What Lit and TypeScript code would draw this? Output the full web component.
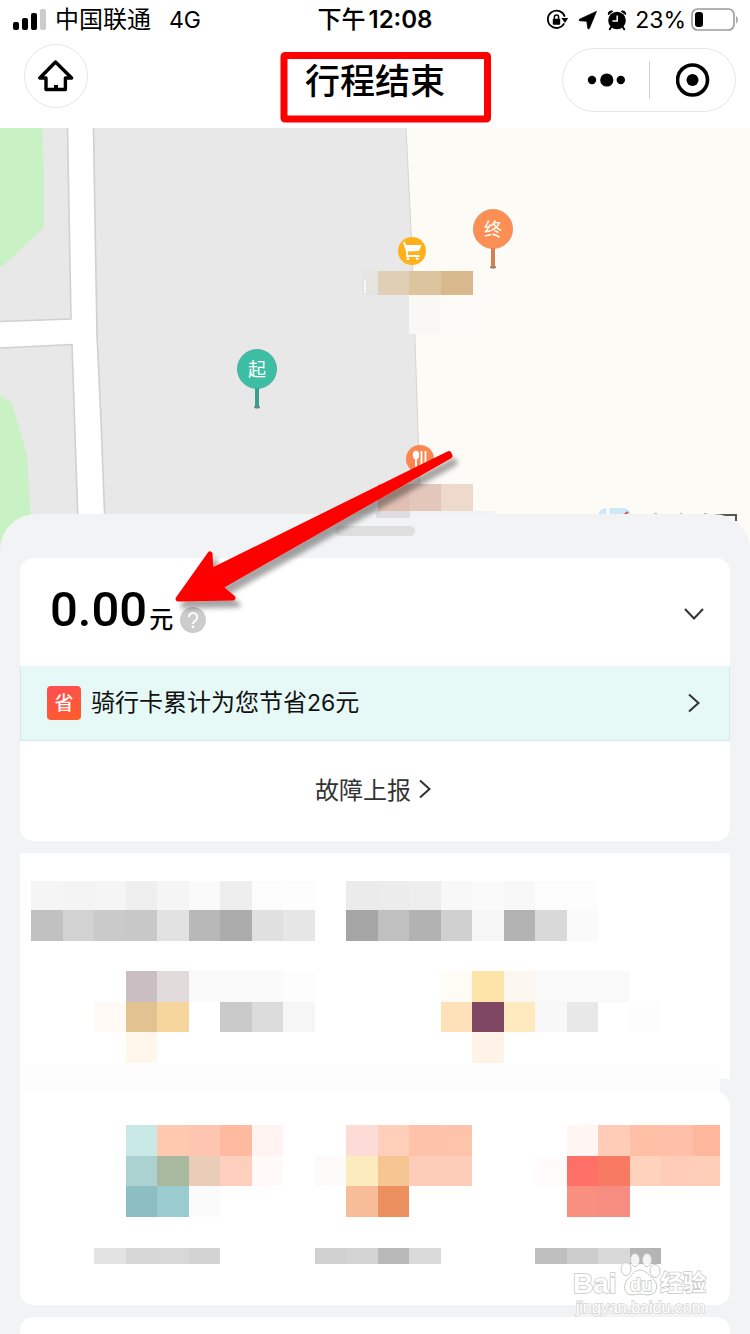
import { LitElement, html, svg, css } from "lit";
import { customElement, property } from "lit/decorators.js";

type Cell = [x: number, y: number, w: number, h: number, fill: string];

/* One tile of a mosaic is 31.5 x 30.7 units. */
const COL = 31.5;
const run = (x: number, y: number, h: number, fills: string[]): Cell[] =>
  fills
    .map((fill, i): Cell => [x + i * COL, y, COL, h, fill])
    .filter((c) => c[4] !== "");

const OFFERS: Cell[] = [
  ...run(11.4, 28, 29, ["#f5f5f5", "#f4f4f4", "#f5f5f5", "#efefef", "#f5f5f5", "#fafafa", "#eeeeee", "#fcfcfc", "#fdfdfd"]),
  ...run(11.4, 57, 31, ["#c1c1c1", "#d2d2d2", "#cacaca", "#c8c8c8", "#e2e2e2", "#b8b8b8", "#acacac", "#e0e0e0", "#e6e6e6"]),
  ...run(326.4, 28, 29, ["#ebebeb", "#ececec", "#eeeeee", "#f8f8f8", "#fafafa", "#f8f8f8", "#fcfcfc", "#fdfdfd"]),
  ...run(326.4, 57, 31, ["#a5a5a5", "#c0c0c0", "#b2b2b2", "#d0d0d0", "#f6f6f6", "#b3b3b3", "#d9d9d9", "#fafafa"]),
  ...run(105.9, 118, 31, ["#cbbec3", "#e1dbdc", "#fafafa", "#fafafa", "#fafafa", "#fdfdfd"]),
  ...run(74.4, 149, 30, ["#fffaf5", "#e3c292", "#f7d69e", "", "#cacaca", "#dcdcdc", "#f6f6f6"]),
  ...run(105.9, 179, 31, ["#fff6ec"]),
  ...run(420.9, 118, 31, ["#fffcf6", "#fee4a8", "#fcf8f0", "#fafafa", "#fafafa", "#f9f9f9"]),
  ...run(420.9, 149, 30, ["#fee0b9", "#7f4764", "#ffeabf", "#f8f8f8", "#e8e8e8", "", "#fdfdfd"]),
  ...run(452.4, 179, 31, ["#fef3e6"]),
  [0, 211, 700, 15, "#fdfdfd"],
];

const SERVICES: Cell[] = [
  ...run(105.9, 33, 31, ["#c7e8e4", "#ffc9b0", "#fec6b0", "#ffba9f", "#fff4f1"]),
  ...run(105.9, 64, 30, ["#abd1d1", "#a8b9a0", "#e9cdb9", "#fecfbc", "#fffaf7"]),
  ...run(105.9, 94, 31, ["#8dbfc2", "#99cbcf", "#fbfbfc"]),
  ...run(74.4, 156, 16, ["#e3e3e3", "#d7d7d7", "#d8d8d8", "#d3d3d3"]),
  ...run(326.4, 33, 31, ["#fddbd6", "#ffcfb9", "#fec2ab", "#fec3ab"]),
  ...run(294.9, 64, 30, ["#fffafa", "#fbebbd", "#f6c692", "#fecdba", "#fecdba"]),
  ...run(326.4, 94, 31, ["#f6bd98", "#ec9060"]),
  ...run(294.9, 156, 16, ["#d1d1d1", "#d4d4d4", "#b9b9b9", "#dadada"]),
  ...run(546.9, 33, 31, ["#fff6f3", "#ffccb8", "#ffc0a6", "#ffbfa8"]),
  [673, 33, 27, 31, "#ffb79d"],
  ...run(515.4, 64, 30, ["#fffbfa", "#fe6f67", "#f97a62", "#ffd2bd", "#ffccba"]),
  [673, 64, 27, 30, "#ffceb8"],
  ...run(546.9, 94, 31, ["#f98f7f", "#f68d80"]),
  ...run(515.4, 156, 16, ["#bfbfbf", "#cccccc", "#d9d9d9", "#b5b5b5"]),
];

@customElement("mosaic-art")
class MosaicArt extends LitElement {
  @property({ attribute: false }) cells: Cell[] = [];
  @property({ type: Number }) span = 200;

  static styles = css`
    :host { display: block; }
    .art { display: block; width: 100%; height: auto; shape-rendering: crispEdges; }
  `;

  render() {
    return html`<svg class="art" viewBox="0 0 710 ${this.span}" aria-hidden="true">
      ${this.cells.map(([x, y, w, h, f]) => svg`<rect x=${x} y=${y} width=${w} height=${h} fill=${f}></rect>`)}
    </svg>`;
  }
}

@customElement("status-bar")
class StatusBar extends LitElement {
  static styles = css`
    :host {
      display: grid;
      grid-template-columns: 1fr auto 1fr;
      align-items: center;
      height: 40px;
      font-size: 24px;
      line-height: 40px;
      color: #000;
    }
    .left { display: flex; align-items: center; gap: 8px; padding-left: 12px; }
    .net { margin-left: 10px; font-size: 23px; }
    .time { font-weight: 500; }
    .num { font-weight: 600; margin-left: 3px; }
    .right { display: flex; align-items: center; justify-content: flex-end; gap: 8px; padding-right: 11px; }
    .power { display: flex; align-items: center; gap: 5px; font-size: 23px; }
    svg { display: block; flex: none; }
  `;

  render() {
    return html`
      <div class="left">
        <svg width="35" height="22" viewBox="0 0 35 22" aria-hidden="true">
          <rect x="1" y="13" width="6" height="8" rx="2"></rect>
          <rect x="10" y="9" width="6" height="12" rx="2"></rect>
          <rect x="19" y="4" width="6" height="17" rx="2"></rect>
          <rect x="28" y="0" width="6" height="21" rx="2" fill="#ccc"></rect>
        </svg>
        <span>中国联通</span><span class="net">4G</span>
      </div>
      <div class="time">下午<span class="num">12:08</span></div>
      <div class="right">
        <svg width="22" height="22" viewBox="0 0 22 22" aria-hidden="true">
          <path d="M17.200 14.400A8.700 8.700 0 1 1 17.800 7.600" fill="none" stroke="#000" stroke-width="1.800"></path>
          <path d="M14.400 9h6.800l-3.200 5z"></path>
          <rect x="5.800" y="9.800" width="7.400" height="6" rx="0.800"></rect>
          <path d="M7.400 10V8.200a2.100 2.100 0 0 1 4.200 0V10" fill="none" stroke="#000" stroke-width="1.500"></path>
        </svg>
        <svg width="22" height="22" viewBox="0 0 22 22" aria-hidden="true">
          <path d="M19.400 2.400 12.400 19.400Q11.400 20.800 10.800 19.200L9.800 12.200 2.800 11.800Q1.200 11.200 2.600 10.200z" stroke="#000" stroke-width="0.800" stroke-linejoin="round"></path>
        </svg>
        <svg width="20" height="22" viewBox="0 0 20 22" aria-hidden="true">
          <circle cx="10" cy="11.500" r="8.800"></circle>
          <path d="M10.200 6.500v5.600H5.400" fill="none" stroke="#fff" stroke-width="1.500"></path>
          <path d="M1.400 5.400A3 3 0 0 1 5.400 2.200zM18.600 5.400A3 3 0 0 0 14.600 2.200z" stroke="#000" stroke-width="1.200" stroke-linejoin="round"></path>
          <path d="M4.400 17.800 2.800 20.200M15.600 17.800l1.600 2.400" stroke="#000" stroke-width="2" stroke-linecap="round"></path>
        </svg>
        <div class="power">
          <span>23%</span>
          <svg width="48" height="24" viewBox="0 0 48 24" aria-hidden="true">
            <rect x="1" y="1" width="42" height="21" rx="5.500" fill="none" stroke="#9a9a9a" stroke-width="1.600"></rect>
            <rect x="4" y="4" width="8" height="15" rx="3"></rect>
            <path d="M45.200 8c2 1 2.400 6 0 7.400z" fill="#9a9a9a"></path>
          </svg>
        </div>
      </div>
    `;
  }
}

@customElement("nav-bar")
class NavBar extends LitElement {
  static styles = css`
    :host {
      display: grid;
      grid-template-columns: 1fr auto 1fr;
      align-items: center;
      height: 80px;
      padding-bottom: 8px;
    }
    button { padding: 0; border: 0; background: none; font: inherit; color: inherit; cursor: pointer; }
    svg { display: block; }
    .home {
      display: grid;
      place-items: center;
      width: 64px;
      height: 64px;
      margin: 0 0 8px 24px;
      border: 1px solid #e6e6e6;
      border-radius: 50%;
      box-sizing: border-box;
    }
    .title { margin: 0; padding-top: 2px; font-size: 35px; line-height: 48px; font-weight: 500; color: #000; }
    .capsule {
      justify-self: end;
      display: flex;
      align-items: center;
      height: 64px;
      margin-right: 14px;
      border: 1px solid #e6e6e6;
      border-radius: 32px;
      box-sizing: border-box;
    }
    .half { display: grid; place-items: center; width: 86px; height: 38px; }
    .half + .half { border-left: 1px solid #d2d2d2; }
  `;

  render() {
    return html`
      <button class="home" aria-label="首页">
        <svg width="36" height="34" viewBox="0 0 36 34" aria-hidden="true">
          <path d="M17.500 3 1.800 19H8v11.500h19.400V19h6.200z" fill="none" stroke="#000" stroke-width="3.400" stroke-linejoin="round"></path>
          <rect x="16" y="26" width="4" height="4"></rect>
        </svg>
      </button>
      <h1 class="title">行程结束</h1>
      <div class="capsule">
        <button class="half" aria-label="更多">
          <svg width="38" height="14" viewBox="0 0 38 14" aria-hidden="true">
            <circle cx="5" cy="7" r="4.200"></circle>
            <circle cx="19.800" cy="7" r="6.600"></circle>
            <circle cx="33.800" cy="7" r="4.200"></circle>
          </svg>
        </button>
        <button class="half" aria-label="关闭">
          <svg width="34" height="34" viewBox="0 0 34 34" aria-hidden="true">
            <circle cx="16.500" cy="17" r="15" fill="none" stroke="#000" stroke-width="3.600"></circle>
            <circle cx="16.500" cy="17" r="6"></circle>
          </svg>
        </button>
      </div>
    `;
  }
}

@customElement("trip-map")
class TripMap extends LitElement {
  static styles = css`
    :host { display: block; }
    .map { display: block; width: 100%; height: 424px; background: #fcfbf6; }
    .label { font-size: 18px; text-anchor: middle; fill: #fff; }
  `;

  private pin(x: number, y: number, fill: string, stem: string, label: string) {
    return svg`
      <ellipse cx=${x} cy=${y + 38} rx="3" ry="1.600" fill="#7d7d7d"></ellipse>
      <rect x=${x - 2} y=${y + 18} width="4" height="20" fill=${stem}></rect>
      <circle cx=${x} cy=${y} r="19.600" fill=${fill} stroke=${stem} stroke-width="0.600"></circle>
      <text class="label" x=${x} y=${y + 7}>${label}</text>`;
  }

  render() {
    return html`
      <svg class="map" viewBox="0 128 750 424" preserveAspectRatio="xMidYMin slice" role="img" aria-label="行程地图">
        <path d="M0 128H406L412 250 422 552H0z" fill="#e8e8e8"></path>
        <path d="M406 128 412 250 422 552" fill="none" stroke="#d6d5cd" stroke-width="1"></path>
        <path d="M67.500 128 71 319 0 321.500V348L72 344.500 79 552H106L101 420 97 335 93.500 128z" fill="#fff"></path>
        <path d="M67.500 128 71 319 0 321.500M0 348 72 344.500 79 552M93.500 128 97 335 101 420 106 552" fill="none" stroke="#d0d0d0" stroke-width="1.600"></path>
        <path d="M0 128H42L44 175V227L3 266 0 267z" fill="#c8f2c3"></path>
        <path d="M0 395 12 403 27 455 31 520V552H0z" fill="#c8f2c3"></path>

        <rect x="362" y="271" width="16" height="24" fill="#e6e4e1"></rect>
        <rect x="364" y="280" width="2" height="13" fill="#f6f6f6"></rect>
        <rect x="378" y="271" width="32" height="24" fill="#e0cfb5"></rect>
        <rect x="409" y="271" width="32" height="24" fill="#dcc49e"></rect>
        <rect x="441" y="271" width="32" height="24" fill="#d7b98d"></rect>
        <rect x="409" y="295" width="32" height="39" fill="#f9f8f4"></rect>
        <rect x="441" y="295" width="49" height="39" fill="#fcfbf8"></rect>
        <rect x="378" y="484" width="32" height="27" fill="#e1bfb3"></rect>
        <rect x="409" y="484" width="32" height="27" fill="#e4c7bb"></rect>
        <rect x="441" y="484" width="32" height="27" fill="#eddacd"></rect>
        <rect x="409" y="511" width="86" height="6" fill="#f3f2f3"></rect>

        <circle cx="412" cy="251" r="14" fill="#ffb11b"></circle>
        <path d="M404 242.500 406.500 250" fill="none" stroke="#fff" stroke-width="1.800" stroke-linecap="round"></path>
        <path d="M405 245h16.500l-2.500 6-12 .5z" fill="#fff"></path>
        <path d="M407 250v6h12.500" fill="none" stroke="#fff" stroke-width="1.800"></path>
        <rect x="406.500" y="257.500" width="2.800" height="2.600" rx="1" fill="#fff"></rect>
        <rect x="415.800" y="257.500" width="2.800" height="2.600" rx="1" fill="#fff"></rect>

        <circle cx="420" cy="459" r="14" fill="#fc8650"></circle>
        <ellipse cx="416" cy="455" rx="3.200" ry="4.200" fill="#fff"></ellipse>
        <path d="M416 458v9M421.500 451v16M425.500 451v14" stroke="#fff" stroke-width="1.900"></path>

        ${this.pin(493, 229, "#fd8f54", "#d67f50", "终")}
        ${this.pin(257, 369, "#3ebda5", "#35a18c", "起")}

        <rect x="596" y="507" width="37" height="20" rx="9" fill="#fff"></rect>
        <rect x="598" y="508" width="33" height="18" rx="8" fill="#cde8f7"></rect>
        <path d="M608 507v8" stroke="#fff" stroke-width="3"></path>
        <path d="M624 515l4-3" stroke="#d24a4a" stroke-width="2"></path>
        <path d="M654 514h3M680 514h2M704 514h3" stroke="#777" stroke-width="1"></path>
        <path d="M714 515h22v6" fill="none" stroke="#555" stroke-width="2"></path>
      </svg>
    `;
  }
}

@customElement("trip-card")
class TripCard extends LitElement {
  static styles = css`
    :host { display: block; background: #fff; border-radius: 14px; }
    button {
      display: flex;
      align-items: center;
      padding: 0;
      border: 0;
      background: none;
      font: inherit;
      color: inherit;
      cursor: pointer;
    }
    svg { display: block; flex: none; }
    .fare { display: flex; justify-content: space-between; align-items: center; height: 104px; padding: 4px 24px 0 30px; }
    .sum { display: flex; align-items: flex-end; padding-bottom: 8px; }
    .amount { font-family: Roboto, "Noto Sans CJK SC", sans-serif; font-size: 49px; font-weight: 500; line-height: 60px; color: #000; }
    .unit { font-size: 24px; font-weight: 500; line-height: 36px; margin: 0 0 2px 2px; color: #000; }
    .help { height: 36px; margin: 0 0 2px 7px; }
    .saving {
      justify-content: space-between;
      width: 100%;
      height: 75px;
      padding: 0 29px 0 26px;
      border: 1px solid #d5e9e7;
      border-top: 0;
      background: #e6f9f7;
      box-sizing: border-box;
      font-size: 24px;
      color: #111;
    }
    .what { display: flex; align-items: center; gap: 10px; }
    .text { padding-bottom: 6px; }
    .digits { font-size: 23px; }
    .tag {
      width: 34px;
      height: 34px;
      border-radius: 4px;
      background: linear-gradient(160deg, #ff4d55, #ff5d28);
      color: #fff;
      font-size: 19px;
      line-height: 36px;
      font-weight: 500;
    }
    .report { justify-content: center; gap: 8px; width: 100%; height: 100px; padding: 0 4px 4px 0; font-size: 24px; color: #333; box-sizing: border-box; }
    .report .text { padding-bottom: 2px; }
  `;

  private chevron() {
    return html`<svg width="12" height="22" viewBox="0 0 12 22" aria-hidden="true">
      <path d="M1 2.500 10.500 11 1 19.500" fill="none" stroke="#333" stroke-width="2"></path>
    </svg>`;
  }

  render() {
    return html`
      <div class="fare">
        <div class="sum">
          <span class="amount">0.00</span><span class="unit">元</span>
          <button class="help" aria-label="费用说明">
            <svg width="26" height="26" viewBox="0 0 26 26" aria-hidden="true">
              <circle cx="13" cy="13" r="13" fill="#ccc"></circle>
              <path d="M8.800 10.200a4.200 4.200 0 1 1 6.600 3.400c-1.700 1.200-2.400 1.800-2.400 3.400" fill="none" stroke="#fff" stroke-width="1.900"></path>
              <circle cx="13" cy="19.800" r="1.400" fill="#fff"></circle>
            </svg>
          </button>
        </div>
        <button aria-label="展开">
          <svg width="24" height="14" viewBox="0 0 24 14" aria-hidden="true">
            <path d="M3 2 12 11.500 21 2" fill="none" stroke="#333" stroke-width="2"></path>
          </svg>
        </button>
      </div>
      <button class="saving">
        <span class="what"><span class="tag">省</span><span class="text">骑行卡累计为您节省<span class="digits">26</span>元</span></span>
        ${this.chevron()}
      </button>
      <button class="report"><span class="text">故障上报</span>${this.chevron()}</button>
    `;
  }
}

@customElement("app-root")
class AppRoot extends LitElement {
  static styles = css`
    :host {
      position: relative;
      display: flex;
      flex-direction: column;
      min-height: 100vh;
      overflow: hidden;
      background: #fff;
      font-family: Inter, "Noto Sans CJK SC", sans-serif;
    }
    .sheet {
      position: relative;
      flex: 1;
      display: flex;
      flex-direction: column;
      margin-top: -38px;
      padding: 12px 20px 0;
      border-radius: 36px 36px 0 0;
      background: #f2f3f5;
    }
    .handle { align-self: center; width: 80px; height: 10px; margin-bottom: 22px; border-radius: 5px; background: #dfdfdf; }
    .offers { margin-top: 12px; background: #fff; }
    .bridge { height: 13px; margin-right: 10px; background: #fdfdfd; }
    .services { padding-bottom: 13px; border-radius: 0 14px 14px 14px; background: #fff; }
    .more { flex: 1; margin-top: 12px; border-radius: 14px 14px 0 0; background: #fff; }
    .marks { position: absolute; top: 0; left: 0; width: 100%; height: 640px; pointer-events: none; }
    .watermark { position: absolute; right: 36px; bottom: 12px; width: 144px; height: 72px; pointer-events: none; }
    .wm { font-family: "Liberation Sans", "Noto Sans CJK SC", sans-serif; fill: #fff; stroke: #cacaca; stroke-width: 1.600px; paint-order: stroke; }
    .brand { font-size: 28px; font-weight: 700; }
    .small { font-size: 18px; font-weight: 700; }
    .cjk { font-size: 23px; font-weight: 700; }
    .url { font-size: 16px; stroke: #d6d6d6; }
  `;

  render() {
    return html`
      <status-bar></status-bar>
      <nav-bar></nav-bar>
      <trip-map></trip-map>
      <main class="sheet">
        <div class="handle"></div>
        <trip-card></trip-card>
        <mosaic-art class="offers" .cells=${OFFERS} .span=${226}></mosaic-art>
        <div class="bridge"></div>
        <mosaic-art class="services" .cells=${SERVICES} .span=${200}></mosaic-art>
        <div class="more"></div>
      </main>
      <svg class="marks" viewBox="0 0 750 640" preserveAspectRatio="xMidYMin" aria-hidden="true">
        <defs>
          <filter id="shade" x="-10%" y="-10%" width="120%" height="130%">
            <feDropShadow dx="5" dy="7" stdDeviation="2.500" flood-color="#000" flood-opacity="0.350"></feDropShadow>
          </filter>
        </defs>
        <rect x="376" y="511" width="34" height="7" fill="#dfdde0"></rect>
        <rect x="284" y="55.500" width="203.500" height="63.500" rx="1" fill="none" stroke="#fe0000" stroke-width="7"></rect>
        <path d="M178 599 210 554 211 571 449 453.500 450 456 220 587 233 598z" fill="#fe0000" stroke="#fe0000" stroke-width="5" stroke-linejoin="round" filter="url(#shade)"></path>
      </svg>
      <svg class="watermark" viewBox="0 0 144 72" role="img" aria-label="Baidu 经验">
        <text class="wm brand" x="3" y="43">Bai</text>
        <g fill="#fff" fill-opacity="0.850" stroke="#c8c8c8" stroke-width="1">
          <ellipse cx="56" cy="19" rx="5" ry="6.500"></ellipse>
          <ellipse cx="65" cy="10" rx="4.600" ry="6.500"></ellipse>
          <ellipse cx="77" cy="10" rx="4.600" ry="6.500"></ellipse>
          <ellipse cx="85" cy="21" rx="5" ry="6.500"></ellipse>
          <path d="M70 20c-6 0-8 5-12 9-5 5-5 16 4 16 3 0 5-1 8-1s5 1 8 1c9 0 11-10 6-15-4-4-8-10-14-10z"></path>
        </g>
        <text class="wm small" x="60" y="41">du</text>
        <text class="wm cjk" x="90" y="41">经验</text>
        <text class="wm url" x="6" y="63">jingyan.baidu.com</text>
      </svg>
    `;
  }
}
